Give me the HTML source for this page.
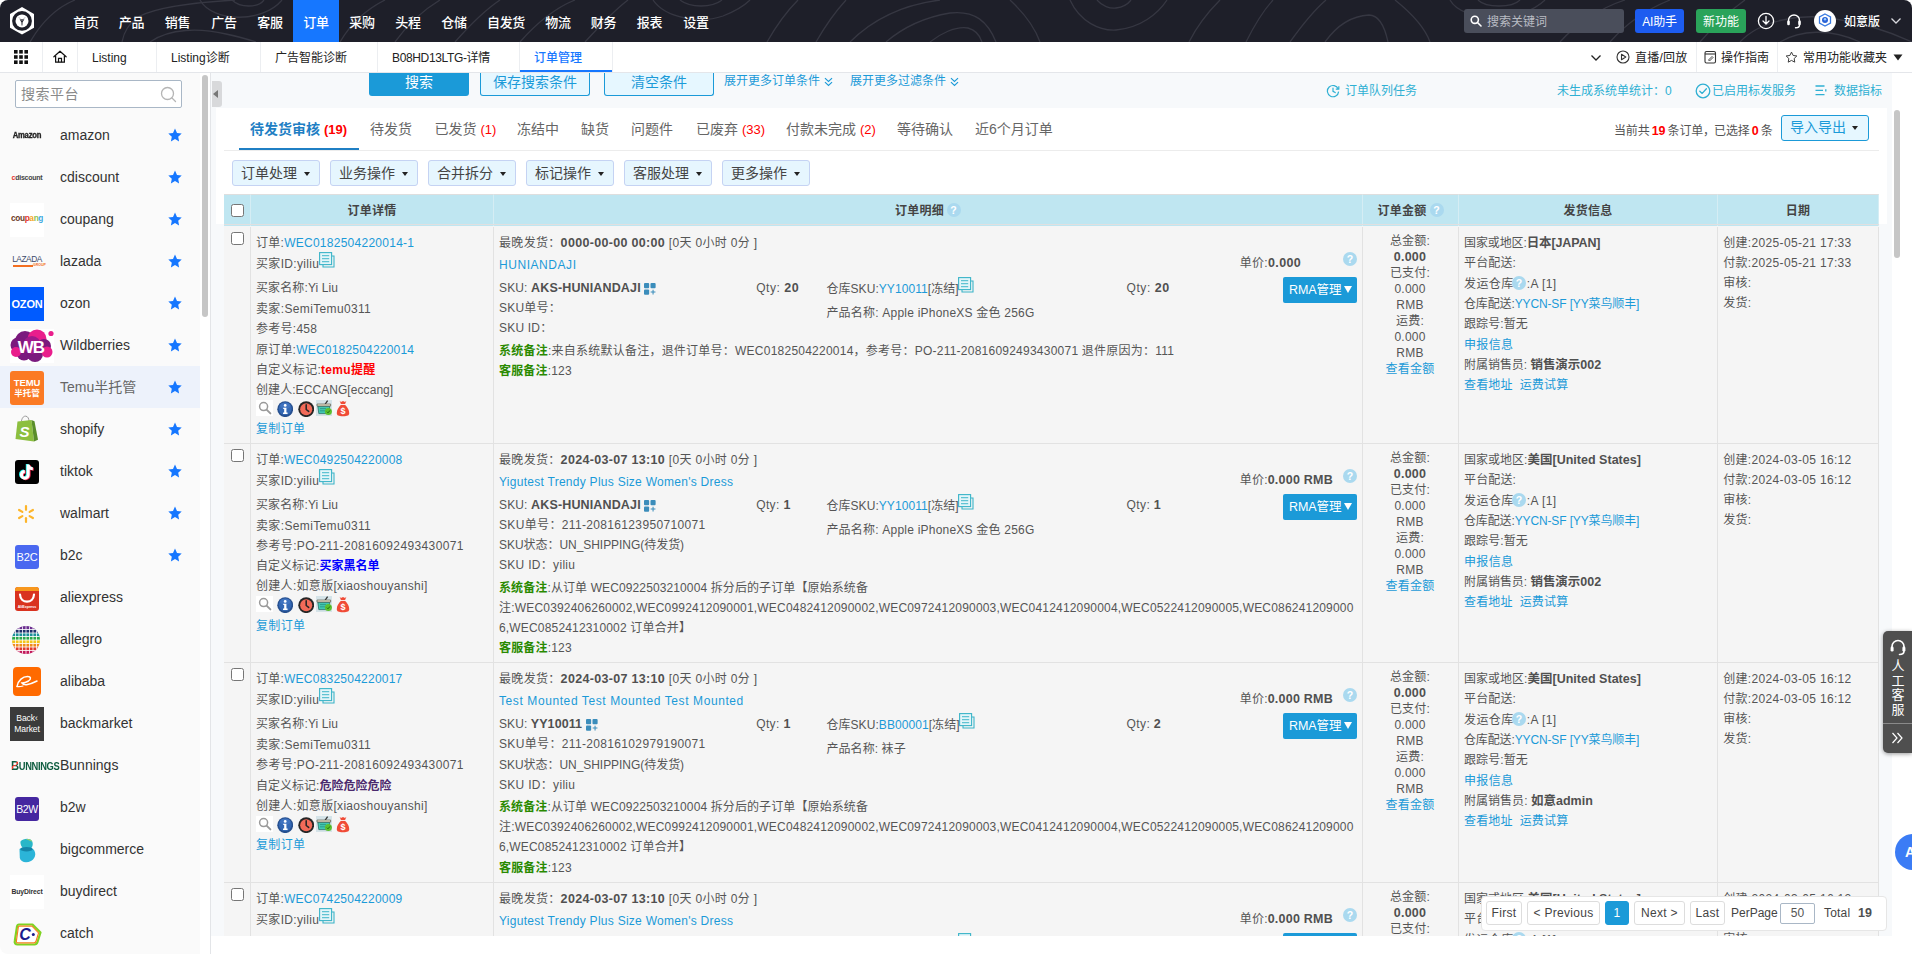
<!DOCTYPE html>
<html lang="zh-CN"><head><meta charset="utf-8"><title>订单管理</title>
<style>
*{box-sizing:border-box}
html,body{margin:0;padding:0}
body{width:1912px;height:954px;overflow:hidden;position:relative;background:#fff;
 font-family:"Liberation Sans","Noto Sans CJK SC",sans-serif;font-size:12px;color:#555}
a{text-decoration:none;color:#1b9ad8}
.abs{position:absolute}
/* ---------- top nav ---------- */
#nav{position:absolute;left:0;top:0;width:1912px;height:42px;background:#1e1f29;overflow:hidden;border-radius:8px 8px 0 0}
#nav .mi{position:absolute;top:0;height:42px;line-height:46px;color:#fff;font-size:13px;text-align:center;width:46px;letter-spacing:-.3px;font-weight:500}
#nav .mi.on{background:#1677ff}
/* ---------- tab bar ---------- */
#tabs{position:absolute;left:0;top:42px;width:1912px;height:31px;background:#fff;border-bottom:1px solid #e4e6ea}
#tabs .t{position:absolute;top:0;height:30px;line-height:33px;font-size:12px;color:#222;white-space:nowrap}
#tabs .sep{position:absolute;top:0;width:1px;height:30px;background:#eceef1}
/* ---------- sidebar ---------- */
#side{position:absolute;left:0;top:73px;width:200px;height:881px;background:#fafafa;overflow:hidden;border-radius:0 0 0 8px}
#side .it{position:absolute;left:0;width:200px;height:42px}
#side .it .lb{position:absolute;left:60px;top:0;line-height:42px;font-size:14px;color:#333;white-space:nowrap}
#side .it .ic{position:absolute;left:10px;top:5px;width:50px;height:34px}
#side .it svg.st{position:absolute;left:168px;top:14px}

#main{position:absolute;left:0;top:0;width:1892px;height:936px;overflow:hidden}
#main .bg{position:absolute;left:211px;top:73px;width:1681px;height:863px;background:#f7f9fb}
#main .wh{position:absolute;left:216px;top:108px;width:1671px;height:116px;background:#fff}
.ln{position:absolute;height:20px;line-height:20px;white-space:nowrap;font-size:12px;color:#555;letter-spacing:.2px}
.ln b{font-size:12.5px;color:#505050}
.lk{color:#1b9ad8}
.tl{color:#2fb0d3}
.btn1{position:absolute;top:73px;height:23px;border-radius:0 0 3px 3px;font-size:14px;line-height:19px;text-align:center}
.stab{position:absolute;top:119px;height:20px;line-height:20px;font-size:14px;color:#666;white-space:nowrap}
.stab i{font-style:normal;color:#f00;font-size:13px}
.op{position:absolute;top:160px;width:88px;height:26px;border:1px solid #c5d3f3;border-radius:3px;background:#e6f6fe;font-size:14px;line-height:24px;color:#444;padding-left:8px;white-space:nowrap}
.op:after{content:"";position:absolute;left:71px;top:11px;border:3.5px solid transparent;border-top:4px solid #222;border-bottom:0}
.th{position:absolute;top:194px;height:32px;background:#bfe6f1;border-right:1px solid #d5edf4;border-top:1px solid #dedede;line-height:32px;text-align:center;font-weight:bold;font-size:12px;color:#444;letter-spacing:.3px}
.row{position:absolute;left:224px;width:1655px;background:#f5f5f5;border-bottom:1px solid #e2e2e2;border-top:1px solid #e2e2e2}
.row .vb{position:absolute;top:0;bottom:0;width:1px;background:#e2e2e2}
.cb{position:absolute;width:13px;height:13px;border:1px solid #767676;border-radius:2.5px;background:#fff}
.q{position:absolute;width:14px;height:14px;border-radius:7px;background:#aad9ef;color:#fff;font-size:10.5px;line-height:14.5px;margin:-1px 0 0 -.5px;text-align:center;font-weight:bold;letter-spacing:0}
.rma{position:absolute;left:1283px;width:74px;height:26px;border-radius:2px;background:#1b9ad8;color:#fff;font-size:12.5px;line-height:27px;padding-left:6px;white-space:nowrap;letter-spacing:-.1px}
.rma:after{content:"";position:absolute;left:61px;top:8.5px;border:4px solid transparent;border-top:7px solid #fff;border-bottom:0}
.am{position:absolute;left:1362px;width:96px;text-align:center;height:16px;line-height:16px;font-size:12px;color:#555;letter-spacing:.2px}
.am b{font-size:12.5px;color:#505050}
.pg{position:absolute;top:901px;height:24px;border:1px solid #ddd;border-radius:3px;background:#fff;font-size:12px;line-height:23px;text-align:center;color:#444;letter-spacing:.3px}
</style></head>
<body>
<div id="nav">
<svg class="abs" style="left:0;top:0" width="1912" height="42" viewBox="0 0 1912 42" fill="none" stroke="#363742" stroke-width="1.3">
<path d="M30 42 C40 25 55 8 75 0"/><path d="M122 42 C124 32 128 24 140 16 C160 6 200 2 235 0"/>
<path d="M200 0 C212 22 262 24 282 0"/><path d="M232 0 C240 8 258 8 264 0"/><path d="M150 42 C170 28 200 28 226 34 C240 37 250 40 256 42"/>
<path d="M340 42 C350 25 365 10 385 0"/><path d="M395 42 C405 28 420 12 440 0"/><path d="M455 42 C470 25 485 10 500 0"/>
<path d="M520 42 C535 25 555 8 575 0"/><path d="M585 42 C598 28 612 12 628 0"/>
<path d="M653 0 C665 18 700 24 723 16 C738 10 746 4 750 0"/><path d="M680 0 C690 8 712 8 722 0"/>
<path d="M767 42 C775 28 786 12 798 0"/><path d="M816 42 C824 28 835 12 846 0"/>
<path d="M886 42 C900 30 920 18 950 13 C975 10 988 22 996 42"/><path d="M930 42 C940 34 955 26 968 28 C976 30 980 36 982 42"/><path d="M850 42 C870 22 900 5 940 0"/><path d="M1010 0 C1025 14 1035 28 1040 42"/>
<path d="M1070 0 C1080 22 1100 31 1116 30 C1140 28 1158 14 1167 0"/><path d="M1097 0 C1102 6 1110 9 1116 8 C1123 7 1128 4 1131 0"/>
<path d="M1189 42 C1196 28 1208 12 1220 0"/><path d="M1246 42 C1253 28 1262 12 1273 0"/><path d="M1290 42 C1300 28 1312 12 1326 0"/>
<path d="M1325 42 C1335 28 1350 16 1369 15 C1380 15 1385 28 1388 42"/><path d="M1395 0 C1410 12 1425 28 1430 42"/>
<path d="M1450 0 C1462 22 1520 24 1545 0"/><path d="M1478 0 C1486 8 1512 8 1520 0"/><path d="M1560 42 C1575 25 1600 8 1625 0"/><path d="M1610 42 C1625 25 1645 10 1670 0"/>
<path d="M1700 42 C1712 28 1728 12 1745 0"/><path d="M1740 42 C1760 20 1800 14 1830 18 C1870 24 1895 34 1912 42"/><path d="M1780 42 C1800 30 1830 28 1860 42"/>
</svg>
<svg class="abs" style="left:9px;top:6px" width="26" height="30" viewBox="0 0 26 30"><path d="M13 1 L25 7.9 V21.7 L13 28.6 L1 21.7 V7.9 Z" fill="#fff"/><circle cx="13" cy="14.9" r="9.9" fill="#1e1f29"/><circle cx="13" cy="14.9" r="6.5" fill="#fff"/><path d="M10.6 13.2 H15.4 L13.6 16.2 L13.4 19.6 H12.6 L12.4 16.2Z" fill="#23242e"/><path d="M13 14.8 L9.8 11.2 M13 14.8 L16.2 11.2" stroke="#9a9aa2" stroke-width=".7"/></svg>
<div class="mi" style="left:63px;width:46px">首页</div>
<div class="mi" style="left:108.5px;width:46px">产品</div>
<div class="mi" style="left:154.5px;width:46px">销售</div>
<div class="mi" style="left:201px;width:46px">广告</div>
<div class="mi" style="left:247px;width:46px">客服</div>
<div class="mi on" style="left:293px;width:46px">订单</div>
<div class="mi" style="left:339px;width:46px">采购</div>
<div class="mi" style="left:385px;width:46px">头程</div>
<div class="mi" style="left:431px;width:46px">仓储</div>
<div class="mi" style="left:483px;width:46px">自发货</div>
<div class="mi" style="left:535px;width:46px">物流</div>
<div class="mi" style="left:580.5px;width:46px">财务</div>
<div class="mi" style="left:626.5px;width:46px">报表</div>
<div class="mi" style="left:673px;width:46px">设置</div>
<div class="abs" style="left:1464px;top:9px;width:160px;height:24px;background:#4a4e5b;border-radius:3px"></div>
<svg class="abs" style="left:1470px;top:15px" width="12" height="12" viewBox="0 0 12 12" fill="none" stroke="#fff" stroke-width="1.6"><circle cx="4.8" cy="4.8" r="3.6"/><path d="M7.5 7.5 L11 11" stroke-linecap="round"/></svg>
<div class="abs" style="left:1487px;top:9px;height:24px;line-height:27px;font-size:12px;color:#b9bcc4">搜索关键词</div>
<div class="abs" style="left:1635px;top:9px;width:49px;height:24px;line-height:26.5px;background:#1d5cf0;border-radius:3px;color:#fff;font-size:12px;text-align:center;letter-spacing:-.2px">AI助手</div>
<div class="abs" style="left:1696px;top:9px;width:50px;height:24px;line-height:26.5px;background:#2aa35a;border-radius:3px;color:#fff;font-size:12px;text-align:center">新功能</div>
<svg class="abs" style="left:1757px;top:12px" width="18" height="18" viewBox="0 0 18 18" fill="none" stroke="#fff" stroke-width="1.3"><circle cx="9" cy="9" r="7.6"/><path d="M9 4.5 V11.5 M6 9 L9 12 L12 9" stroke-linecap="round" stroke-linejoin="round"/></svg>
<svg class="abs" style="left:1785px;top:12px" width="18" height="18" viewBox="0 0 18 18" fill="none" stroke="#fff" stroke-width="1.4"><path d="M3.5 11 V8.5 A5.5 5.5 0 0 1 14.5 8.5 V11" /><rect x="2.2" y="8.6" width="2.6" height="4.6" rx="1.2" fill="#fff" stroke="none"/><rect x="13.2" y="8.6" width="2.6" height="4.6" rx="1.2" fill="#fff" stroke="none"/><path d="M14.5 13 C14.5 15 12.5 15.8 10.5 15.8" stroke-linecap="round"/></svg>
<div class="abs" style="left:1814px;top:10px;width:22px;height:22px;border-radius:11px;background:#fff"></div>
<svg class="abs" style="left:1818px;top:13px" width="14" height="16" viewBox="0 0 14 16"><path d="M7 1 L12.5 4 V10 L7 13 L1.5 10 V4Z" fill="none" stroke="#3a7be0" stroke-width="1.3"/><circle cx="7" cy="7" r="3" fill="#2a63d6"/><circle cx="7" cy="6.2" r="1.2" fill="#9ad0ff"/></svg>
<div class="abs" style="left:1844px;top:0;height:42px;line-height:45px;font-size:12px;color:#fff;font-weight:500">如意版</div>
<svg class="abs" style="left:1890px;top:17px" width="12" height="8" viewBox="0 0 12 8" fill="none" stroke="#d8d8de" stroke-width="1.3"><path d="M1.5 1.5 L6 6 L10.5 1.5"/></svg>
</div>
<div id="tabs">
<svg class="abs" style="left:14px;top:8px" width="14" height="14" viewBox="0 0 14 14" fill="#111"><rect x="0" y="0" width="3.6" height="3.6"/><rect x="5.2" y="0" width="3.6" height="3.6"/><rect x="10.4" y="0" width="3.6" height="3.6"/><rect x="0" y="5.2" width="3.6" height="3.6"/><rect x="5.2" y="5.2" width="3.6" height="3.6"/><rect x="10.4" y="5.2" width="3.6" height="3.6"/><rect x="0" y="10.4" width="3.6" height="3.6"/><rect x="5.2" y="10.4" width="3.6" height="3.6"/><rect x="10.4" y="10.4" width="3.6" height="3.6"/></svg>
<div class="sep" style="left:42px"></div><svg class="abs" style="left:53px;top:8px" width="14" height="13.5" viewBox="0 0 16 15" fill="none" stroke="#111" stroke-width="1.4"><path d="M1 7.5 L8 1.2 L15 7.5" stroke-linejoin="round" stroke-linecap="round"/><path d="M3 6.5 V13.7 H13 V6.5"/><path d="M6.3 13.7 V9.3 H9.7 V13.7"/></svg>
<div class="sep" style="left:77px"></div><div class="t" style="left:92px">Listing</div><div class="sep" style="left:156px"></div><div class="t" style="left:171px">Listing诊断</div><div class="sep" style="left:260px"></div><div class="t" style="left:275px">广告智能诊断</div><div class="sep" style="left:377px"></div><div class="t" style="left:392px;letter-spacing:-.35px">B08HD13LTG-详情</div><div class="sep" style="left:519px"></div><div class="t" style="left:534px;color:#1677ff;font-weight:500">订单管理</div><div class="abs" style="left:520px;top:28px;width:92px;height:2px;background:#1677ff"></div><div class="sep" style="left:612px"></div>
<svg class="abs" style="left:1590px;top:12px" width="12" height="8" viewBox="0 0 12 8" fill="none" stroke="#222" stroke-width="1.3"><path d="M1.5 1.5 L6 6 L10.5 1.5"/></svg><svg class="abs" style="left:1616px;top:8px" width="14" height="14" viewBox="0 0 14 14" fill="none" stroke="#333" stroke-width="1.1"><circle cx="7" cy="7" r="6"/><path d="M5.5 4.3 L9.8 7 L5.5 9.7Z" stroke-linejoin="round"/></svg><div class="t" style="left:1635px;font-size:12px;letter-spacing:.2px">直播/回放</div><div class="sep" style="left:1696px"></div><svg class="abs" style="left:1704px;top:8px" width="13" height="14" viewBox="0 0 13 14" fill="none" stroke="#333" stroke-width="1.1"><rect x="1" y="1.5" width="10.5" height="11.5" rx="1.5"/><path d="M1 4 H11.5"/><path d="M4.5 10 L8 6.5 L9 7.5 L5.5 11Z" stroke-width=".9"/></svg><div class="t" style="left:1721px;font-size:12px">操作指南</div><div class="sep" style="left:1777px"></div><svg class="abs" style="left:1785px;top:9px" width="13" height="12" viewBox="0 0 15 14" fill="none" stroke="#333" stroke-width="1.1"><path d="M7.5 1.3 L9.4 5.2 L13.7 5.8 L10.6 8.8 L11.3 13 L7.5 11 L3.7 13 L4.4 8.8 L1.3 5.8 L5.6 5.2Z" stroke-linejoin="round"/></svg><div class="t" style="left:1803px;font-size:12px">常用功能收藏夹</div><svg class="abs" style="left:1893px;top:12px" width="10" height="7" viewBox="0 0 10 7"><path d="M0.5 0.5 H9.5 L5 6.5Z" fill="#222"/></svg></div>
<div id="side">
<div class="abs" style="left:15px;top:7px;width:167px;height:28px;border:1px solid #a9b7c6;border-radius:2px;background:#fff"></div><div class="abs" style="left:21px;top:7px;height:28px;line-height:28px;font-size:14px;color:#8a8a8a;letter-spacing:.5px">搜索平台</div><svg class="abs" style="left:160px;top:13px" width="17" height="17" viewBox="0 0 17 17" fill="none" stroke="#b5b5b5" stroke-width="1.3"><circle cx="7.5" cy="7.5" r="6"/><path d="M12 12 L15.5 15.5" stroke-linecap="round"/></svg>
<div class="it" style="top:41px"><div class="ic"><div style="position:absolute;left:1px;top:11px;width:32px;text-align:center;font-size:8.5px;line-height:11px;font-weight:bold;color:#222;letter-spacing:-.2px;-webkit-text-stroke:.35px #222;transform:scaleX(.9);transform-origin:50% 50%">Amazon</div></div><div class="lb">amazon</div><svg class="st" width="14" height="14" viewBox="0 0 14 14"><path d="M7 .6 L9 4.9 L13.7 5.5 L10.2 8.7 L11.1 13.4 L7 11.1 L2.9 13.4 L3.8 8.7 L.3 5.5 L5 4.9Z" fill="#1677ff"/></svg></div>
<div class="it" style="top:83px"><div class="ic"><div style="position:absolute;left:0;top:12px;width:34px;text-align:center;font-size:7px;line-height:10px;font-weight:bold;color:#444;letter-spacing:-.25px"><span style="color:#e5322d">c</span>discount</div></div><div class="lb">cdiscount</div><svg class="st" width="14" height="14" viewBox="0 0 14 14"><path d="M7 .6 L9 4.9 L13.7 5.5 L10.2 8.7 L11.1 13.4 L7 11.1 L2.9 13.4 L3.8 8.7 L.3 5.5 L5 4.9Z" fill="#1677ff"/></svg></div>
<div class="it" style="top:125px"><div class="ic"><div style="position:absolute;left:0;top:0;width:34px;height:34px;background:#fff"></div><div style="position:absolute;left:0;top:10px;width:34px;text-align:center;font-size:8.3px;line-height:11px;font-weight:bold;letter-spacing:-.35px;color:#6b3a1f">cou<span style="color:#e3342f">p</span><span style="color:#f5a623">a</span><span style="color:#8bc34a">n</span><span style="color:#3fa9e0">g</span></div></div><div class="lb">coupang</div><svg class="st" width="14" height="14" viewBox="0 0 14 14"><path d="M7 .6 L9 4.9 L13.7 5.5 L10.2 8.7 L11.1 13.4 L7 11.1 L2.9 13.4 L3.8 8.7 L.3 5.5 L5 4.9Z" fill="#1677ff"/></svg></div>
<div class="it" style="top:167px"><div class="ic"><div style="position:absolute;left:2px;top:9px;width:30px;text-align:center;font-size:8.4px;line-height:10px;color:#3a4a6a;letter-spacing:-.5px">LAZADA</div><div style="position:absolute;left:3px;top:19.5px;width:20px;height:2px;background:#f36f21"></div><div style="position:absolute;left:23px;top:18px;font-size:3.5px;line-height:4px;color:#f36f21;font-weight:bold">GROUP</div></div><div class="lb">lazada</div><svg class="st" width="14" height="14" viewBox="0 0 14 14"><path d="M7 .6 L9 4.9 L13.7 5.5 L10.2 8.7 L11.1 13.4 L7 11.1 L2.9 13.4 L3.8 8.7 L.3 5.5 L5 4.9Z" fill="#1677ff"/></svg></div>
<div class="it" style="top:209px"><div class="ic"><div style="position:absolute;left:0;top:0;width:34px;height:34px;background:#005bff"></div><div style="position:absolute;left:0;top:11px;width:34px;text-align:center;font-size:11px;line-height:12px;font-weight:bold;color:#fff;letter-spacing:-.2px">OZON</div></div><div class="lb">ozon</div><svg class="st" width="14" height="14" viewBox="0 0 14 14"><path d="M7 .6 L9 4.9 L13.7 5.5 L10.2 8.7 L11.1 13.4 L7 11.1 L2.9 13.4 L3.8 8.7 L.3 5.5 L5 4.9Z" fill="#1677ff"/></svg></div>
<div class="it" style="top:251px"><div class="ic"><svg style="position:absolute;left:0;top:0" width="44" height="34" viewBox="0 0 44 34"><rect width="44" height="34" fill="#fff"/><circle cx="15" cy="12" r="10" fill="#7b1a7e"/><circle cx="8" cy="16" r="7.5" fill="#7b1a7e"/><circle cx="27" cy="10" r="9.5" fill="#e91e8c"/><circle cx="34" cy="17" r="7" fill="#7b1a7e"/><circle cx="14" cy="24" r="7.5" fill="#7b1a7e"/><circle cx="25" cy="25" r="8" fill="#7b1a7e"/><circle cx="6" cy="23" r="5" fill="#e91e8c"/><circle cx="37" cy="23" r="5.5" fill="#e91e8c"/><circle cx="22" cy="16" r="9" fill="#a0198c"/><circle cx="41" cy="4.5" r="2.6" fill="#e91e8c"/><text x="21" y="24" font-size="17" font-weight="bold" fill="#fff" text-anchor="middle" letter-spacing="-1" font-family="Liberation Sans,sans-serif">WB</text></svg></div><div class="lb">Wildberries</div><svg class="st" width="14" height="14" viewBox="0 0 14 14"><path d="M7 .6 L9 4.9 L13.7 5.5 L10.2 8.7 L11.1 13.4 L7 11.1 L2.9 13.4 L3.8 8.7 L.3 5.5 L5 4.9Z" fill="#1677ff"/></svg></div>
<div class="it" style="top:293px;background:#edf2fb"><div class="ic"><div style="position:absolute;left:0;top:0;width:34px;height:34px;border-radius:3px;background:#fb7a24"></div><div style="position:absolute;left:0;top:7px;width:34px;text-align:center;font-size:9.5px;line-height:10px;font-weight:bold;color:#fff;letter-spacing:-.1px">TEMU</div><div style="position:absolute;left:0;top:17px;width:34px;text-align:center;font-size:8.5px;line-height:11px;font-weight:bold;color:#fff;font-family:Liberation Sans,Noto Sans CJK SC,sans-serif">半托管</div></div><div class="lb" style="color:#666">Temu半托管</div><svg class="st" width="14" height="14" viewBox="0 0 14 14"><path d="M7 .6 L9 4.9 L13.7 5.5 L10.2 8.7 L11.1 13.4 L7 11.1 L2.9 13.4 L3.8 8.7 L.3 5.5 L5 4.9Z" fill="#1677ff"/></svg></div>
<div class="it" style="top:335px"><div class="ic"><svg style="position:absolute;left:4px;top:2px" width="26" height="30" viewBox="0 0 26 30"><path d="M7.5 6 C8 2.5 10 .8 12 1.2 C14 1.6 14.8 3.6 15 6" fill="none" stroke="#9a9a9a" stroke-width="1"/><path d="M3.5 6.5 L17.5 5 L20 26.5 L1.5 24 Z" fill="#8cbf3f"/><path d="M17.5 5 L20.5 6.3 L24 24.8 L20 26.5Z" fill="#5a8e2a"/><text x="10.6" y="21.5" font-size="15" font-weight="bold" font-style="italic" fill="#fff" text-anchor="middle" font-family="Liberation Sans,sans-serif">S</text></svg></div><div class="lb">shopify</div><svg class="st" width="14" height="14" viewBox="0 0 14 14"><path d="M7 .6 L9 4.9 L13.7 5.5 L10.2 8.7 L11.1 13.4 L7 11.1 L2.9 13.4 L3.8 8.7 L.3 5.5 L5 4.9Z" fill="#1677ff"/></svg></div>
<div class="it" style="top:377px"><div class="ic"><svg style="position:absolute;left:5px;top:5px" width="24" height="24" viewBox="0 0 24 24"><rect width="24" height="24" rx="3" fill="#000"/><g fill="none" stroke-width="3" stroke-linecap="butt"><path d="M13.2 4.5 V14.8 A3.4 3.4 0 1 1 9.8 11.4 M13.2 4.5 C13.4 7 15.4 8.6 17.8 8.7" stroke="#25f4ee" transform="translate(-.9 -.5)"/><path d="M13.2 4.5 V14.8 A3.4 3.4 0 1 1 9.8 11.4 M13.2 4.5 C13.4 7 15.4 8.6 17.8 8.7" stroke="#fe2c55" transform="translate(.9 .5)"/><path d="M13.2 4.5 V14.8 A3.4 3.4 0 1 1 9.8 11.4 M13.2 4.5 C13.4 7 15.4 8.6 17.8 8.7" stroke="#fff"/></g></svg></div><div class="lb">tiktok</div><svg class="st" width="14" height="14" viewBox="0 0 14 14"><path d="M7 .6 L9 4.9 L13.7 5.5 L10.2 8.7 L11.1 13.4 L7 11.1 L2.9 13.4 L3.8 8.7 L.3 5.5 L5 4.9Z" fill="#1677ff"/></svg></div>
<div class="it" style="top:419px"><div class="ic"><svg style="position:absolute;left:6px;top:7px" width="20" height="20" viewBox="-10 -10 20 20"><g stroke="#fdb52a" stroke-width="2.2" stroke-linecap="round"><path d="M0 -4.2 V-8" transform="rotate(0)"/><path d="M0 -4.2 V-8" transform="rotate(60)"/><path d="M0 -4.2 V-8" transform="rotate(120)"/><path d="M0 -4.2 V-8" transform="rotate(180)"/><path d="M0 -4.2 V-8" transform="rotate(240)"/><path d="M0 -4.2 V-8" transform="rotate(300)"/></g></svg></div><div class="lb">walmart</div><svg class="st" width="14" height="14" viewBox="0 0 14 14"><path d="M7 .6 L9 4.9 L13.7 5.5 L10.2 8.7 L11.1 13.4 L7 11.1 L2.9 13.4 L3.8 8.7 L.3 5.5 L5 4.9Z" fill="#1677ff"/></svg></div>
<div class="it" style="top:461px"><div class="ic"><div style="position:absolute;left:5px;top:6px;width:24px;height:24px;border-radius:3px;background:#4a68f0"></div><div style="position:absolute;left:5px;top:12px;width:24px;text-align:center;font-size:11px;line-height:12px;color:#fff;letter-spacing:-.2px">B2C</div></div><div class="lb">b2c</div><svg class="st" width="14" height="14" viewBox="0 0 14 14"><path d="M7 .6 L9 4.9 L13.7 5.5 L10.2 8.7 L11.1 13.4 L7 11.1 L2.9 13.4 L3.8 8.7 L.3 5.5 L5 4.9Z" fill="#1677ff"/></svg></div>
<div class="it" style="top:503px"><div class="ic"><div style="position:absolute;left:5px;top:6px;width:24px;height:24px;border-radius:3px;background:#d9321f;overflow:hidden"><div style="height:4px;background:#f7971d"></div></div><svg style="position:absolute;left:5px;top:6px" width="24" height="24" viewBox="0 0 24 24"><path d="M5 7.5 C5.5 17 18.5 17 19 7.5" fill="none" stroke="#fff" stroke-width="2.2" stroke-linecap="round"/></svg><div style="position:absolute;left:5px;top:24px;width:24px;text-align:center;font-size:3.6px;line-height:4px;color:#fff;font-weight:bold">AliExpress</div></div><div class="lb">aliexpress</div></div>
<div class="it" style="top:545px"><div class="ic"><svg style="position:absolute;left:2px;top:3px" width="28" height="28" viewBox="0 0 28 28"><defs><clipPath id="alc"><circle cx="14" cy="14" r="14"/></clipPath></defs><g clip-path="url(#alc)"><rect x="0" y="0" width="28" height="3.5" fill="#6a2c8e"/><rect x="0" y="3.5" width="28" height="3.5" fill="#1f2f6b"/><rect x="0" y="7" width="28" height="3.5" fill="#1b8f9a"/><rect x="0" y="10.5" width="28" height="3.5" fill="#2aa84a"/><rect x="0" y="14" width="28" height="3.5" fill="#f3c61a"/><rect x="0" y="17.5" width="28" height="3.5" fill="#f08a1c"/><rect x="0" y="21" width="28" height="3.5" fill="#e0392b"/><rect x="0" y="24.5" width="28" height="3.5" fill="#c2185b"/><rect x="3.1" y="0" width=".8" height="28" fill="#fff"/><rect x="0" y="3.1" width="28" height=".8" fill="#fff"/><rect x="6.6" y="0" width=".8" height="28" fill="#fff"/><rect x="0" y="6.6" width="28" height=".8" fill="#fff"/><rect x="10.1" y="0" width=".8" height="28" fill="#fff"/><rect x="0" y="10.1" width="28" height=".8" fill="#fff"/><rect x="13.6" y="0" width=".8" height="28" fill="#fff"/><rect x="0" y="13.6" width="28" height=".8" fill="#fff"/><rect x="17.1" y="0" width=".8" height="28" fill="#fff"/><rect x="0" y="17.1" width="28" height=".8" fill="#fff"/><rect x="20.6" y="0" width=".8" height="28" fill="#fff"/><rect x="0" y="20.6" width="28" height=".8" fill="#fff"/><rect x="24.1" y="0" width=".8" height="28" fill="#fff"/><rect x="0" y="24.1" width="28" height=".8" fill="#fff"/></g></svg></div><div class="lb">allegro</div></div>
<div class="it" style="top:587px"><div class="ic"><svg style="position:absolute;left:3px;top:2px" width="28" height="29" viewBox="0 0 28 29"><rect width="28" height="29" rx="4" fill="#ff6a00"/><path d="M4 19.5 C5 13 10 9.5 14.5 9.5 C18 9.5 18.5 12 15.5 14 C13 15.5 10.5 16 9 16 C10 17.5 12 18 14.5 17.5 C17.5 17 21 15.5 24 14" fill="none" stroke="#fff" stroke-width="1.5" stroke-linecap="round"/><path d="M4 19.5 C6 20 8 19.6 10 19" fill="none" stroke="#fff" stroke-width="1.2" stroke-linecap="round"/></svg></div><div class="lb">alibaba</div></div>
<div class="it" style="top:629px"><div class="ic"><div style="position:absolute;left:0;top:0;width:34px;height:34px;background:#3b3b3b"></div><div style="position:absolute;left:0;top:6px;width:34px;text-align:center;font-size:8.6px;line-height:11px;color:#fff;letter-spacing:-.1px">Back&#8249;<br>Market</div></div><div class="lb">backmarket</div></div>
<div class="it" style="top:671px"><div class="ic"><div style="position:absolute;left:1px;top:11px;width:50px;font-size:10.4px;line-height:12px;font-weight:bold;color:#0d5c3f;letter-spacing:-.4px;white-space:nowrap;transform:scaleX(.9);transform-origin:0 50%"><span style="font-size:12.5px;background:linear-gradient(135deg,#0d5c3f 38%,#e0392b 38%,#e0392b 52%,#0d5c3f 52%);-webkit-background-clip:text;background-clip:text;color:transparent">B</span>UNNINGS</div></div><div class="lb">Bunnings</div></div>
<div class="it" style="top:713px"><div class="ic"><div style="position:absolute;left:5px;top:6px;width:24px;height:24px;border-radius:3px;background:#4527a0"></div><div style="position:absolute;left:5px;top:12px;width:24px;text-align:center;font-size:10.5px;line-height:12px;color:#fff;letter-spacing:-.5px">B2W</div></div><div class="lb">b2w</div></div>
<div class="it" style="top:755px"><div class="ic"><svg style="position:absolute;left:8px;top:5px" width="19" height="25" viewBox="0 0 19 25"><path d="M2.5 3.5 C5 .5 12 -.3 14 3 C15.6 6 14.5 9.5 12 11.2 C6 11.5 2 9 2.5 3.5Z" fill="#29b6c8"/><path d="M8 1.2 C11 .3 13.6 1.5 14.4 4 C12.5 2.5 10 2 8 1.2Z" fill="#9ed36a"/><path d="M1.5 11 C4 8.5 12 8 15.5 11.5 C18.5 15 17.5 20.5 13 23 C8 25.5 2.5 24 1.8 20Z" fill="#2bb4d8"/><ellipse cx="8.5" cy="11.2" rx="6" ry="2.3" fill="#1585a8"/></svg></div><div class="lb">bigcommerce</div></div>
<div class="it" style="top:797px"><div class="ic"><div style="position:absolute;left:0;top:0;width:34px;height:34px;background:#fff"></div><div style="position:absolute;left:0;top:12px;width:34px;text-align:center;font-size:6.8px;line-height:10px;font-weight:bold;color:#333;letter-spacing:-.1px">BuyDirect</div></div><div class="lb">buydirect</div></div>
<div class="it" style="top:839px"><div class="ic"><svg style="position:absolute;left:3px;top:6px" width="29" height="23" viewBox="0 0 29 23"><path d="M6 1.5 H19.5 L27.5 9.5 L24.5 19 C24 20.5 23 21.5 21.5 21.5 H4.5 C2.5 21.5 1.3 20 1.8 18 L4 3.5 C4.2 2.3 5 1.5 6 1.5Z" fill="#fff" stroke="#7ed321" stroke-width="2.2" stroke-linejoin="round"/><path d="M6.3 3.2 H19 L25.6 9.9 L23 18.3 C22.7 19.3 22 19.8 21 19.8 H5 C3.8 19.8 3.2 19 3.4 18 L5.3 4.2 C5.4 3.6 5.8 3.2 6.3 3.2Z" fill="#fff" stroke="#f5821f" stroke-width="1.2" stroke-linejoin="round"/><text x="12" y="17.2" font-size="16" font-weight="bold" font-style="italic" fill="#1a1a8c" text-anchor="middle" font-family="Liberation Sans,sans-serif">C</text><circle cx="20.3" cy="11.4" r="1.5" fill="#1a1a8c"/></svg></div><div class="lb">catch</div></div>
</div>
<div class="abs" style="left:202px;top:75px;width:6px;height:242px;background:#c6c6c6;border-radius:3px"></div>
<div class="abs" style="left:210px;top:73px;width:1px;height:881px;background:#e3e5e8"></div>
<div class="abs" style="z-index:3;left:212px;top:81px;width:10px;height:26px;background:#d8d9db;border-radius:0 3px 3px 0"></div><div class="abs" style="z-index:3;left:213px;top:89.5px;border:4.6px solid transparent;border-right:5.5px solid #777;border-left:0"></div>
<div id="main">
<div class="bg"></div><div class="wh"></div>
<div class="btn1" style="left:369px;width:100px;background:#1b9ad8;color:#fff">搜索</div><div class="btn1" style="left:480px;width:110px;background:#e6f7ff;border:1px solid #1b9ad8;border-top:0;color:#1b9ad8">保存搜索条件</div><div class="btn1" style="left:604px;width:110px;background:#e6f7ff;border:1px solid #1b9ad8;border-top:0;color:#1b9ad8">清空条件</div>
<div class="ln lk" style="left:724px;top:71px;letter-spacing:0">展开更多订单条件</div><svg style="position:absolute;left:824px;top:76.5px" width="9" height="10" viewBox="0 0 8 9" fill="none" stroke="#1b9ad8" stroke-width="1"><path d="M.8 1 L4 4 L7.2 1 M.8 4.6 L4 7.6 L7.2 4.6"/></svg><div class="ln lk" style="left:850px;top:71px;letter-spacing:0">展开更多过滤条件</div><svg style="position:absolute;left:950px;top:76.5px" width="9" height="10" viewBox="0 0 8 9" fill="none" stroke="#1b9ad8" stroke-width="1"><path d="M.8 1 L4 4 L7.2 1 M.8 4.6 L4 7.6 L7.2 4.6"/></svg>
<svg class="abs" style="left:1326px;top:83.5px" width="14" height="14" viewBox="0 0 14 14" fill="none" stroke="#2fb0d3" stroke-width="1.2"><path d="M12.2 5 A5.6 5.6 0 1 0 12.6 7.6"/><path d="M12.8 2.2 V5.2 H9.8" stroke-linejoin="round"/><path d="M7 4 V7.3 L9.2 8.6" stroke-linecap="round"/></svg><div class="ln tl" style="left:1345px;top:81px;letter-spacing:0">订单队列任务</div><div class="ln tl" style="left:1557px;top:81px;letter-spacing:0">未生成系统单统计：0</div><svg class="abs" style="left:1695px;top:83px" width="16" height="16" viewBox="0 0 16 16" fill="none" stroke="#2fb0d3" stroke-width="1.3"><circle cx="8" cy="8" r="6.8"/><path d="M4.8 8.2 L7.2 10.4 L11.4 5.8" stroke-linecap="round" stroke-linejoin="round"/></svg><div class="ln tl" style="left:1712px;top:81px;letter-spacing:0">已启用标发服务</div><svg class="abs" style="left:1815px;top:85px" width="13" height="11" viewBox="0 0 13 11" fill="none" stroke="#2fb0d3" stroke-width="1.3"><path d="M.5 1 H9.5 M.5 5.3 H8 M.5 9.6 H9.5 M10.8 4.2 V6.4"/></svg><div class="ln tl" style="left:1834px;top:81px;letter-spacing:0">数据指标</div>
<div class="stab" style="left:250px"><b style="color:#1f7fc4">待发货审核 </b><i style="font-weight:bold">(19)</i></div><div class="stab" style="left:370px">待发货</div><div class="stab" style="left:434.5px">已发货 <i>(1)</i></div><div class="stab" style="left:517px">冻结中</div><div class="stab" style="left:581px">缺货</div><div class="stab" style="left:631px">问题件</div><div class="stab" style="left:696px">已废弃 <i>(33)</i></div><div class="stab" style="left:786px">付款未完成 <i>(2)</i></div><div class="stab" style="left:897px">等待确认</div><div class="stab" style="left:975px">近6个月订单</div>
<div class="abs" style="left:224px;top:150px;width:1655px;height:1px;background:#ececec"></div><div class="abs" style="left:239px;top:148px;width:120px;height:2px;background:#1f7fc4"></div>
<div class="ln" style="left:1614px;top:121px;color:#555;letter-spacing:-.15px;word-spacing:-1px">当前共 <b style="color:#f00">19</b> 条订单<span style="display:inline-block;width:11px;overflow:hidden;vertical-align:top">，</span>已选择 <b style="color:#f00">0</b> 条</div><div class="abs" style="left:1781px;top:115px;width:88px;height:26px;border:1px solid #1b9ad8;border-radius:3px;background:#e6f7ff;color:#1b9ad8;font-size:14px;line-height:23px;padding-left:8px">导入导出</div><div class="abs" style="left:1852px;top:126px;border:3.5px solid transparent;border-top:4px solid #222;border-bottom:0"></div>
<div class="op" style="left:232px">订单处理</div><div class="op" style="left:330px">业务操作</div><div class="op" style="left:428px">合并拆分</div><div class="op" style="left:526px">标记操作</div><div class="op" style="left:624px">客服处理</div><div class="op" style="left:722px">更多操作</div>
<div class="th" style="left:224px;width:27px"></div><div class="th" style="left:251px;width:243px">订单详情</div><div class="th" style="left:494px;width:869px">订单明细<span style="display:inline-block;width:17px"></span></div><div class="th" style="left:1363px;width:96px">订单金额<span style="display:inline-block;width:17px"></span></div><div class="th" style="left:1459px;width:259px">发货信息</div><div class="th" style="left:1718px;width:161px">日期</div><div class="abs" style="left:224px;top:224px;width:1655px;height:1px;background:#e0e0e0"></div><div class="cb" style="left:231px;top:204px"></div><div class="q" style="left:947px;top:204px">?</div><div class="q" style="left:1430px;top:204px">?</div>
<div class="row" style="top:226px;height:218px;border-top-color:#f5f5f5">
<div class="vb" style="left:26px"></div><div class="vb" style="left:269px"></div><div class="vb" style="left:1138px"></div><div class="vb" style="left:1234px"></div><div class="vb" style="left:1493px"></div><div class="vb" style="left:1654px"></div><div class="cb" style="left:7px;top:5px"></div>
<div id="f1" class="ln " style="left:32px;top:5.6px;letter-spacing:0.262px;">订单:<span class="lk">WEC0182504220014-1</span></div><div id="f2" class="ln " style="left:32px;top:26.6px;letter-spacing:0.332px;">买家ID:yiliu</div><svg style="position:absolute;left:95px;top:25px" width="16" height="16" viewBox="0 0 16 16" fill="none" stroke="#3bb4c8" stroke-width="1.1"><path d="M12.6 4 H15 V15 H4 V12.6"/><rect x=".6" y=".6" width="12" height="12" fill="#e3f5f9"/><path d="M3 3.6 H10.2 M3 6.6 H10.2 M3 9.6 H10.2" stroke-width="1.3" stroke="#5fc3d3"/></svg><div id="f3" class="ln " style="left:32px;top:50.5px;letter-spacing:0.109px;">买家名称:Yi Liu</div><div id="f4" class="ln " style="left:32px;top:71.7px;letter-spacing:0.355px;">卖家:SemiTemu0311</div><div id="f5" class="ln " style="left:32px;top:91.8px;letter-spacing:0.272px;">参考号:458</div><div id="f6" class="ln " style="left:32px;top:112.5px;letter-spacing:0.205px;">原订单:<span class="lk">WEC0182504220014</span></div><div id="f7" class="ln " style="left:32px;top:132.7px;letter-spacing:0.289px;">自定义标记:<b style="color:#f00;font-size:12px">temu提醒</b></div><div id="f8" class="ln " style="left:32px;top:152.9px;letter-spacing:0.068px;">创建人:ECCANG[eccang]</div><div style="position:absolute;left:32px;top:172.6px;width:100px;height:18px"><div style="position:absolute;left:0;top:0;width:17px;height:16px;background:#fff"></div><svg style="position:absolute;left:2px;top:1.5px" width="14" height="14" viewBox="0 0 14 14" fill="none" stroke="#9a9a9a" stroke-width="1.5"><circle cx="5.6" cy="5.6" r="4"/><path d="M8.8 8.8 L12.4 12.4" stroke-linecap="round" stroke-width="1.9"/></svg><svg style="position:absolute;left:21px;top:1px" width="16.4" height="16.4" viewBox="0 0 16 16"><circle cx="8" cy="8" r="7.7" fill="#27508f"/><circle cx="8" cy="7.4" r="6.3" fill="#3468b4"/><ellipse cx="8" cy="4.6" rx="5" ry="3" fill="#4a7cc6" opacity=".6"/><circle cx="8" cy="4.3" r="1.35" fill="#fff"/><path d="M6.1 6.6 H9.2 V11.3 H10.3 V12.6 H5.9 V11.3 H7 V7.9 H6.1Z" fill="#fff"/></svg><svg style="position:absolute;left:42px;top:1px" width="16.4" height="16.4" viewBox="0 0 16 16"><circle cx="8" cy="8" r="7.7" fill="#262626"/><circle cx="8" cy="8" r="5.9" fill="#f26a58"/><path d="M8 3.8 V8.3 L10.4 10.2" stroke="#262626" stroke-width="1.5" fill="none" stroke-linecap="round"/></svg><div style="position:absolute;left:60px;top:0;width:16px;height:16px;background:#d5e3e8"></div><svg style="position:absolute;left:60px;top:0" width="17" height="17" viewBox="0 0 17 17"><path d="M8.6 5 L11.6 .6" stroke="#333" stroke-width="1.3"/><path d="M1.8 6.2 H13.8 L12.8 13.6 H2.8Z" fill="#42c8b2" stroke="#2a6f68" stroke-width=".8"/><path d="M1 4 H14.6 V6 H1Z" fill="#ebe4cf" stroke="#4a4a3a" stroke-width=".6"/><path d="M4 8.6 H10 M4 10.8 H9" stroke="#2a8f80" stroke-width=".8"/><circle cx="12.4" cy="11.6" r="3.5" fill="#5cc12f"/><path d="M10.9 11.7 L12 12.8 L14 10.4" stroke="#1e6b10" stroke-width="1" fill="none"/></svg><svg style="position:absolute;left:80px;top:0" width="14" height="17" viewBox="0 0 14 17"><path d="M3.6 .8 L5 2 L7 .9 L9 2 L10.4 .8 L9 4.2 H5Z" fill="#f04b36"/><path d="M5 4.8 H9 C11.6 7.2 13.2 10.2 13.2 13 C13.2 15.6 11.6 16.2 7 16.2 C2.4 16.2 .8 15.6 .8 13 C.8 10.2 2.4 7.2 5 4.8Z" fill="#f04b36"/><path d="M4.6 4.5 H9.4" stroke="#fff" stroke-width=".7"/><text x="7" y="14.4" font-size="9" font-weight="bold" fill="#fff" text-anchor="middle" font-family="Liberation Sans,sans-serif">$</text></svg></div>
<div id="f9" class="ln lk" style="left:32px;top:192.3px;letter-spacing:0.329px;">复制订单</div>
<div id="f10" class="ln " style="left:275px;top:5.6px;letter-spacing:0.320px;">最晚发货：<b>0000-00-00 00:00</b> [0天 0小时 0分 ]</div><div id="f11" class="ln lk" style="left:275px;top:27.5px;letter-spacing:0.554px;">HUNIANDAJI</div><div id="f12" class="ln " style="left:275px;top:50.5px;letter-spacing:0.145px;">SKU: <b>AKS-HUNIANDAJI</b></div><svg style="position:absolute;left:420px;top:56px" width="12.4" height="12.4" viewBox="0 0 13 13" fill="#3b8dbb"><rect x="0" y="0" width="5.4" height="5.4" rx="1"/><rect x="6.8" y="0" width="5.4" height="5.4" rx="1"/><rect x="0" y="6.8" width="5.4" height="5.4" rx="1"/><path d="M9.5 7 V12 M7 9.5 H12" stroke="#3b8dbb" stroke-width="1.1"/></svg><div class="ln " style="left:275px;top:70.6px;">SKU单号：</div><div class="ln " style="left:275px;top:90.7px;">SKU ID：</div><div id="f13" class="ln " style="left:275px;top:114.1px;letter-spacing:0.235px;"><b style="color:#2a8a00;font-size:12px">系统备注</b>:来自系统默认备注，退件订单号：WEC0182504220014，参考号：PO-211-20816092493430071 退件原因为：111</div><div id="f14" class="ln " style="left:275px;top:133.5px;letter-spacing:0.176px;"><b style="color:#2a8a00;font-size:12px">客服备注</b>:123</div>
<div id="f15" class="ln " style="left:532.2px;top:50.5px;letter-spacing:0.541px;">Qty: <b>20</b></div><div id="f16" class="ln " style="left:602.4px;top:51.6px;letter-spacing:0.064px;">仓库SKU:<span class="lk">YY10011</span>[冻结]</div><svg style="position:absolute;left:734px;top:50px" width="16" height="16" viewBox="0 0 16 16" fill="none" stroke="#3bb4c8" stroke-width="1.1"><path d="M12.6 4 H15 V15 H4 V12.6"/><rect x=".6" y=".6" width="12" height="12" fill="#e3f5f9"/><path d="M3 3.6 H10.2 M3 6.6 H10.2 M3 9.6 H10.2" stroke-width="1.3" stroke="#5fc3d3"/></svg><div id="f17" class="ln " style="left:602.4px;top:75.5px;letter-spacing:0.215px;">产品名称: Apple iPhoneXS 金色 256G</div><div id="f18" class="ln " style="left:902.6px;top:50.5px;letter-spacing:0.541px;">Qty: <b>20</b></div><div id="f19" class="ln " style="left:1015.7px;top:25.6px;letter-spacing:0.340px;">单价:<b>0.000</b></div><div class="q" style="left:1119.5px;top:26px">?</div><div class="rma" style="top:50px;left:1059px">RMA管理</div>
<div class="am" style="left:1138px;top:6px">总金额:</div><div class="am" style="left:1138px;top:22px"><b>0.000</b></div><div class="am" style="left:1138px;top:38px">已支付:</div><div class="am" style="left:1138px;top:54px">0.000</div><div class="am" style="left:1138px;top:70px">RMB</div><div class="am" style="left:1138px;top:86px">运费:</div><div class="am" style="left:1138px;top:102px">0.000</div><div class="am" style="left:1138px;top:118px">RMB</div><div class="am" style="left:1138px;top:134px"><span class="lk">查看金额</span></div>
<div id="f20" class="ln " style="left:1240px;top:5.6px;letter-spacing:-0.116px;">国家或地区:<b>日本[JAPAN]</b></div><div id="f21" class="ln " style="left:1240px;top:26px;letter-spacing:0.139px;">平台配送:</div><div id="f22" class="ln " style="left:1240px;top:46.6px;letter-spacing:0.425px;">发运仓库<span style="display:inline-block;width:13px"></span>:A [1]</div><div class="q" style="left:1288.5px;top:50px">?</div><div id="f23" class="ln " style="left:1240px;top:66.9px;letter-spacing:-0.132px;">仓库配送:<span class="lk">YYCN-SF [YY菜鸟顺丰]</span></div><div id="f24" class="ln " style="left:1240px;top:87.3px;letter-spacing:0.091px;">跟踪号:暂无</div><div id="f25" class="ln lk" style="left:1240px;top:107.6px;letter-spacing:0.329px;">申报信息</div><div id="f26" class="ln " style="left:1240px;top:127.6px;letter-spacing:-0.034px;">附属销售员: <b>销售演示002</b></div><div id="f27" class="ln lk" style="left:1240px;top:147.7px;letter-spacing:0.170px;">查看地址&nbsp; 运费试算</div>
<div id="f28" class="ln " style="left:1499.2px;top:5.6px;letter-spacing:0.334px;">创建:2025-05-21 17:33</div><div id="f29" class="ln " style="left:1499.2px;top:26px;letter-spacing:0.334px;">付款:2025-05-21 17:33</div><div id="f30" class="ln " style="left:1499.2px;top:46px;letter-spacing:0.331px;">审核:</div><div id="f31" class="ln " style="left:1499.2px;top:66px;letter-spacing:0.331px;">发货:</div></div>
<div class="row" style="top:443px;height:220px">
<div class="vb" style="left:26px"></div><div class="vb" style="left:269px"></div><div class="vb" style="left:1138px"></div><div class="vb" style="left:1234px"></div><div class="vb" style="left:1493px"></div><div class="vb" style="left:1654px"></div><div class="cb" style="left:7px;top:5px"></div>
<div id="f32" class="ln " style="left:32px;top:5.6px;letter-spacing:0.233px;">订单:<span class="lk">WEC0492504220008</span></div><div id="f33" class="ln " style="left:32px;top:26.6px;letter-spacing:0.332px;">买家ID:yiliu</div><svg style="position:absolute;left:95px;top:25px" width="16" height="16" viewBox="0 0 16 16" fill="none" stroke="#3bb4c8" stroke-width="1.1"><path d="M12.6 4 H15 V15 H4 V12.6"/><rect x=".6" y=".6" width="12" height="12" fill="#e3f5f9"/><path d="M3 3.6 H10.2 M3 6.6 H10.2 M3 9.6 H10.2" stroke-width="1.3" stroke="#5fc3d3"/></svg><div id="f34" class="ln " style="left:32px;top:50.5px;letter-spacing:0.109px;">买家名称:Yi Liu</div><div id="f35" class="ln " style="left:32px;top:71.7px;letter-spacing:0.355px;">卖家:SemiTemu0311</div><div id="f36" class="ln " style="left:32px;top:91.8px;letter-spacing:0.379px;">参考号:PO-211-20816092493430071</div><div id="f37" class="ln " style="left:32px;top:112px;letter-spacing:0.014px;">自定义标记:<b style="color:#00f;font-size:12px">买家黑名单</b></div><div id="f38" class="ln " style="left:32px;top:132.2px;letter-spacing:0.303px;">创建人:如意版[xiaoshouyanshi]</div><div style="position:absolute;left:32px;top:151.9px;width:100px;height:18px"><div style="position:absolute;left:0;top:0;width:17px;height:16px;background:#fff"></div><svg style="position:absolute;left:2px;top:1.5px" width="14" height="14" viewBox="0 0 14 14" fill="none" stroke="#9a9a9a" stroke-width="1.5"><circle cx="5.6" cy="5.6" r="4"/><path d="M8.8 8.8 L12.4 12.4" stroke-linecap="round" stroke-width="1.9"/></svg><svg style="position:absolute;left:21px;top:1px" width="16.4" height="16.4" viewBox="0 0 16 16"><circle cx="8" cy="8" r="7.7" fill="#27508f"/><circle cx="8" cy="7.4" r="6.3" fill="#3468b4"/><ellipse cx="8" cy="4.6" rx="5" ry="3" fill="#4a7cc6" opacity=".6"/><circle cx="8" cy="4.3" r="1.35" fill="#fff"/><path d="M6.1 6.6 H9.2 V11.3 H10.3 V12.6 H5.9 V11.3 H7 V7.9 H6.1Z" fill="#fff"/></svg><svg style="position:absolute;left:42px;top:1px" width="16.4" height="16.4" viewBox="0 0 16 16"><circle cx="8" cy="8" r="7.7" fill="#262626"/><circle cx="8" cy="8" r="5.9" fill="#f26a58"/><path d="M8 3.8 V8.3 L10.4 10.2" stroke="#262626" stroke-width="1.5" fill="none" stroke-linecap="round"/></svg><div style="position:absolute;left:60px;top:0;width:16px;height:16px;background:#d5e3e8"></div><svg style="position:absolute;left:60px;top:0" width="17" height="17" viewBox="0 0 17 17"><path d="M8.6 5 L11.6 .6" stroke="#333" stroke-width="1.3"/><path d="M1.8 6.2 H13.8 L12.8 13.6 H2.8Z" fill="#42c8b2" stroke="#2a6f68" stroke-width=".8"/><path d="M1 4 H14.6 V6 H1Z" fill="#ebe4cf" stroke="#4a4a3a" stroke-width=".6"/><path d="M4 8.6 H10 M4 10.8 H9" stroke="#2a8f80" stroke-width=".8"/><circle cx="12.4" cy="11.6" r="3.5" fill="#5cc12f"/><path d="M10.9 11.7 L12 12.8 L14 10.4" stroke="#1e6b10" stroke-width="1" fill="none"/></svg><svg style="position:absolute;left:80px;top:0" width="14" height="17" viewBox="0 0 14 17"><path d="M3.6 .8 L5 2 L7 .9 L9 2 L10.4 .8 L9 4.2 H5Z" fill="#f04b36"/><path d="M5 4.8 H9 C11.6 7.2 13.2 10.2 13.2 13 C13.2 15.6 11.6 16.2 7 16.2 C2.4 16.2 .8 15.6 .8 13 C.8 10.2 2.4 7.2 5 4.8Z" fill="#f04b36"/><path d="M4.6 4.5 H9.4" stroke="#fff" stroke-width=".7"/><text x="7" y="14.4" font-size="9" font-weight="bold" fill="#fff" text-anchor="middle" font-family="Liberation Sans,sans-serif">$</text></svg></div>
<div id="f39" class="ln lk" style="left:32px;top:171.6px;letter-spacing:0.329px;">复制订单</div>
<div id="f40" class="ln " style="left:275px;top:5.6px;letter-spacing:0.320px;">最晚发货：<b>2024-03-07 13:10</b> [0天 0小时 0分 ]</div><div id="f41" class="ln lk" style="left:275px;top:27.5px;letter-spacing:0.271px;">Yigutest Trendy Plus Size Women's Dress</div><div id="f42" class="ln " style="left:275px;top:50.5px;letter-spacing:0.145px;">SKU: <b>AKS-HUNIANDAJI</b></div><svg style="position:absolute;left:420px;top:56px" width="12.4" height="12.4" viewBox="0 0 13 13" fill="#3b8dbb"><rect x="0" y="0" width="5.4" height="5.4" rx="1"/><rect x="6.8" y="0" width="5.4" height="5.4" rx="1"/><rect x="0" y="6.8" width="5.4" height="5.4" rx="1"/><path d="M9.5 7 V12 M7 9.5 H12" stroke="#3b8dbb" stroke-width="1.1"/></svg><div id="f43" class="ln " style="left:275px;top:70.6px;letter-spacing:0.344px;">SKU单号：211-20816123950710071</div><div id="f44" class="ln " style="left:275px;top:90.7px;letter-spacing:-0.044px;">SKU状态：UN_SHIPPING(待发货)</div><div id="f45" class="ln " style="left:275px;top:110.8px;letter-spacing:0.301px;">SKU ID：yiliu</div><div id="f46" class="ln " style="left:275px;top:133.5px;letter-spacing:0.111px;"><b style="color:#2a8a00;font-size:12px">系统备注</b>:从订单 WEC0922503210004 拆分后的子订单【原始系统备</div><div id="f47" class="ln " style="left:275px;top:153.55px;letter-spacing:0.190px;">注:WEC0392406260002,WEC0992412090001,WEC0482412090002,WEC0972412090003,WEC0412412090004,WEC0522412090005,WEC086241209000</div><div id="f48" class="ln " style="left:275px;top:173.6px;letter-spacing:0.169px;">6,WEC0852412310002 订单合并】</div><div id="f49" class="ln " style="left:275px;top:193.7px;letter-spacing:0.176px;"><b style="color:#2a8a00;font-size:12px">客服备注</b>:123</div>
<div id="f50" class="ln " style="left:532.2px;top:50.5px;letter-spacing:0.380px;">Qty: <b>1</b></div><div id="f51" class="ln " style="left:602.4px;top:51.6px;letter-spacing:0.064px;">仓库SKU:<span class="lk">YY10011</span>[冻结]</div><svg style="position:absolute;left:734px;top:50px" width="16" height="16" viewBox="0 0 16 16" fill="none" stroke="#3bb4c8" stroke-width="1.1"><path d="M12.6 4 H15 V15 H4 V12.6"/><rect x=".6" y=".6" width="12" height="12" fill="#e3f5f9"/><path d="M3 3.6 H10.2 M3 6.6 H10.2 M3 9.6 H10.2" stroke-width="1.3" stroke="#5fc3d3"/></svg><div id="f52" class="ln " style="left:602.4px;top:75.5px;letter-spacing:0.215px;">产品名称: Apple iPhoneXS 金色 256G</div><div id="f53" class="ln " style="left:902.6px;top:50.5px;letter-spacing:0.380px;">Qty: <b>1</b></div><div id="f54" class="ln " style="left:1015.7px;top:25.6px;letter-spacing:0.221px;">单价:<b>0.000 RMB</b></div><div class="q" style="left:1119.5px;top:26px">?</div><div class="rma" style="top:50px;left:1059px">RMA管理</div>
<div class="am" style="left:1138px;top:6px">总金额:</div><div class="am" style="left:1138px;top:22px"><b>0.000</b></div><div class="am" style="left:1138px;top:38px">已支付:</div><div class="am" style="left:1138px;top:54px">0.000</div><div class="am" style="left:1138px;top:70px">RMB</div><div class="am" style="left:1138px;top:86px">运费:</div><div class="am" style="left:1138px;top:102px">0.000</div><div class="am" style="left:1138px;top:118px">RMB</div><div class="am" style="left:1138px;top:134px"><span class="lk">查看金额</span></div>
<div id="f55" class="ln " style="left:1240px;top:5.6px;letter-spacing:0.016px;">国家或地区:<b>美国[United States]</b></div><div id="f56" class="ln " style="left:1240px;top:26px;letter-spacing:0.139px;">平台配送:</div><div id="f57" class="ln " style="left:1240px;top:46.6px;letter-spacing:0.425px;">发运仓库<span style="display:inline-block;width:13px"></span>:A [1]</div><div class="q" style="left:1288.5px;top:50px">?</div><div id="f58" class="ln " style="left:1240px;top:66.9px;letter-spacing:-0.132px;">仓库配送:<span class="lk">YYCN-SF [YY菜鸟顺丰]</span></div><div id="f59" class="ln " style="left:1240px;top:87.3px;letter-spacing:0.091px;">跟踪号:暂无</div><div id="f60" class="ln lk" style="left:1240px;top:107.6px;letter-spacing:0.329px;">申报信息</div><div id="f61" class="ln " style="left:1240px;top:127.6px;letter-spacing:-0.034px;">附属销售员: <b>销售演示002</b></div><div id="f62" class="ln lk" style="left:1240px;top:147.7px;letter-spacing:0.170px;">查看地址&nbsp; 运费试算</div>
<div id="f63" class="ln " style="left:1499.2px;top:5.6px;letter-spacing:0.334px;">创建:2024-03-05 16:12</div><div id="f64" class="ln " style="left:1499.2px;top:26px;letter-spacing:0.334px;">付款:2024-03-05 16:12</div><div id="f65" class="ln " style="left:1499.2px;top:46px;letter-spacing:0.331px;">审核:</div><div id="f66" class="ln " style="left:1499.2px;top:66px;letter-spacing:0.331px;">发货:</div></div>
<div class="row" style="top:662px;height:221px">
<div class="vb" style="left:26px"></div><div class="vb" style="left:269px"></div><div class="vb" style="left:1138px"></div><div class="vb" style="left:1234px"></div><div class="vb" style="left:1493px"></div><div class="vb" style="left:1654px"></div><div class="cb" style="left:7px;top:5px"></div>
<div id="f67" class="ln " style="left:32px;top:5.6px;letter-spacing:0.233px;">订单:<span class="lk">WEC0832504220017</span></div><div id="f68" class="ln " style="left:32px;top:26.6px;letter-spacing:0.332px;">买家ID:yiliu</div><svg style="position:absolute;left:95px;top:25px" width="16" height="16" viewBox="0 0 16 16" fill="none" stroke="#3bb4c8" stroke-width="1.1"><path d="M12.6 4 H15 V15 H4 V12.6"/><rect x=".6" y=".6" width="12" height="12" fill="#e3f5f9"/><path d="M3 3.6 H10.2 M3 6.6 H10.2 M3 9.6 H10.2" stroke-width="1.3" stroke="#5fc3d3"/></svg><div id="f69" class="ln " style="left:32px;top:51.3px;letter-spacing:0.109px;">买家名称:Yi Liu</div><div id="f70" class="ln " style="left:32px;top:71.7px;letter-spacing:0.355px;">卖家:SemiTemu0311</div><div id="f71" class="ln " style="left:32px;top:91.8px;letter-spacing:0.379px;">参考号:PO-211-20816092493430071</div><div id="f72" class="ln " style="left:32px;top:112.8px;letter-spacing:0.023px;">自定义标记:<b style="color:#4b2a6e;font-size:12px">危险危险危险</b></div><div id="f73" class="ln " style="left:32px;top:133px;letter-spacing:0.303px;">创建人:如意版[xiaoshouyanshi]</div><div style="position:absolute;left:32px;top:152.7px;width:100px;height:18px"><div style="position:absolute;left:0;top:0;width:17px;height:16px;background:#fff"></div><svg style="position:absolute;left:2px;top:1.5px" width="14" height="14" viewBox="0 0 14 14" fill="none" stroke="#9a9a9a" stroke-width="1.5"><circle cx="5.6" cy="5.6" r="4"/><path d="M8.8 8.8 L12.4 12.4" stroke-linecap="round" stroke-width="1.9"/></svg><svg style="position:absolute;left:21px;top:1px" width="16.4" height="16.4" viewBox="0 0 16 16"><circle cx="8" cy="8" r="7.7" fill="#27508f"/><circle cx="8" cy="7.4" r="6.3" fill="#3468b4"/><ellipse cx="8" cy="4.6" rx="5" ry="3" fill="#4a7cc6" opacity=".6"/><circle cx="8" cy="4.3" r="1.35" fill="#fff"/><path d="M6.1 6.6 H9.2 V11.3 H10.3 V12.6 H5.9 V11.3 H7 V7.9 H6.1Z" fill="#fff"/></svg><svg style="position:absolute;left:42px;top:1px" width="16.4" height="16.4" viewBox="0 0 16 16"><circle cx="8" cy="8" r="7.7" fill="#262626"/><circle cx="8" cy="8" r="5.9" fill="#f26a58"/><path d="M8 3.8 V8.3 L10.4 10.2" stroke="#262626" stroke-width="1.5" fill="none" stroke-linecap="round"/></svg><div style="position:absolute;left:60px;top:0;width:16px;height:16px;background:#d5e3e8"></div><svg style="position:absolute;left:60px;top:0" width="17" height="17" viewBox="0 0 17 17"><path d="M8.6 5 L11.6 .6" stroke="#333" stroke-width="1.3"/><path d="M1.8 6.2 H13.8 L12.8 13.6 H2.8Z" fill="#42c8b2" stroke="#2a6f68" stroke-width=".8"/><path d="M1 4 H14.6 V6 H1Z" fill="#ebe4cf" stroke="#4a4a3a" stroke-width=".6"/><path d="M4 8.6 H10 M4 10.8 H9" stroke="#2a8f80" stroke-width=".8"/><circle cx="12.4" cy="11.6" r="3.5" fill="#5cc12f"/><path d="M10.9 11.7 L12 12.8 L14 10.4" stroke="#1e6b10" stroke-width="1" fill="none"/></svg><svg style="position:absolute;left:80px;top:0" width="14" height="17" viewBox="0 0 14 17"><path d="M3.6 .8 L5 2 L7 .9 L9 2 L10.4 .8 L9 4.2 H5Z" fill="#f04b36"/><path d="M5 4.8 H9 C11.6 7.2 13.2 10.2 13.2 13 C13.2 15.6 11.6 16.2 7 16.2 C2.4 16.2 .8 15.6 .8 13 C.8 10.2 2.4 7.2 5 4.8Z" fill="#f04b36"/><path d="M4.6 4.5 H9.4" stroke="#fff" stroke-width=".7"/><text x="7" y="14.4" font-size="9" font-weight="bold" fill="#fff" text-anchor="middle" font-family="Liberation Sans,sans-serif">$</text></svg></div>
<div id="f74" class="ln lk" style="left:32px;top:172.4px;letter-spacing:0.329px;">复制订单</div>
<div id="f75" class="ln " style="left:275px;top:5.6px;letter-spacing:0.320px;">最晚发货：<b>2024-03-07 13:10</b> [0天 0小时 0分 ]</div><div id="f76" class="ln lk" style="left:275px;top:28.3px;letter-spacing:0.593px;">Test Mounted Test Mounted Test Mounted</div><div id="f77" class="ln " style="left:275px;top:51.3px;letter-spacing:0.082px;">SKU: <b>YY10011</b></div><svg style="position:absolute;left:362px;top:56px" width="12.4" height="12.4" viewBox="0 0 13 13" fill="#3b8dbb"><rect x="0" y="0" width="5.4" height="5.4" rx="1"/><rect x="6.8" y="0" width="5.4" height="5.4" rx="1"/><rect x="0" y="6.8" width="5.4" height="5.4" rx="1"/><path d="M9.5 7 V12 M7 9.5 H12" stroke="#3b8dbb" stroke-width="1.1"/></svg><div id="f78" class="ln " style="left:275px;top:71.4px;letter-spacing:0.344px;">SKU单号：211-20816102979190071</div><div id="f79" class="ln " style="left:275px;top:91.5px;letter-spacing:-0.044px;">SKU状态：UN_SHIPPING(待发货)</div><div id="f80" class="ln " style="left:275px;top:111.6px;letter-spacing:0.301px;">SKU ID：yiliu</div><div id="f81" class="ln " style="left:275px;top:134.3px;letter-spacing:0.111px;"><b style="color:#2a8a00;font-size:12px">系统备注</b>:从订单 WEC0922503210004 拆分后的子订单【原始系统备</div><div id="f82" class="ln " style="left:275px;top:154.35px;letter-spacing:0.190px;">注:WEC0392406260002,WEC0992412090001,WEC0482412090002,WEC0972412090003,WEC0412412090004,WEC0522412090005,WEC086241209000</div><div id="f83" class="ln " style="left:275px;top:174.4px;letter-spacing:0.169px;">6,WEC0852412310002 订单合并】</div><div id="f84" class="ln " style="left:275px;top:194.5px;letter-spacing:0.176px;"><b style="color:#2a8a00;font-size:12px">客服备注</b>:123</div>
<div id="f85" class="ln " style="left:532.2px;top:50.5px;letter-spacing:0.380px;">Qty: <b>1</b></div><div id="f86" class="ln " style="left:602.4px;top:51.6px;letter-spacing:0.071px;">仓库SKU:<span class="lk">BB00001</span>[冻结]</div><svg style="position:absolute;left:735px;top:50px" width="16" height="16" viewBox="0 0 16 16" fill="none" stroke="#3bb4c8" stroke-width="1.1"><path d="M12.6 4 H15 V15 H4 V12.6"/><rect x=".6" y=".6" width="12" height="12" fill="#e3f5f9"/><path d="M3 3.6 H10.2 M3 6.6 H10.2 M3 9.6 H10.2" stroke-width="1.3" stroke="#5fc3d3"/></svg><div id="f87" class="ln " style="left:602.4px;top:75.5px;letter-spacing:0.088px;">产品名称: 袜子</div><div id="f88" class="ln " style="left:902.6px;top:50.5px;letter-spacing:0.380px;">Qty: <b>2</b></div><div id="f89" class="ln " style="left:1015.7px;top:25.6px;letter-spacing:0.221px;">单价:<b>0.000 RMB</b></div><div class="q" style="left:1119.5px;top:26px">?</div><div class="rma" style="top:50px;left:1059px">RMA管理</div>
<div class="am" style="left:1138px;top:6px">总金额:</div><div class="am" style="left:1138px;top:22px"><b>0.000</b></div><div class="am" style="left:1138px;top:38px">已支付:</div><div class="am" style="left:1138px;top:54px">0.000</div><div class="am" style="left:1138px;top:70px">RMB</div><div class="am" style="left:1138px;top:86px">运费:</div><div class="am" style="left:1138px;top:102px">0.000</div><div class="am" style="left:1138px;top:118px">RMB</div><div class="am" style="left:1138px;top:134px"><span class="lk">查看金额</span></div>
<div id="f90" class="ln " style="left:1240px;top:5.6px;letter-spacing:0.016px;">国家或地区:<b>美国[United States]</b></div><div id="f91" class="ln " style="left:1240px;top:26px;letter-spacing:0.139px;">平台配送:</div><div id="f92" class="ln " style="left:1240px;top:46.6px;letter-spacing:0.425px;">发运仓库<span style="display:inline-block;width:13px"></span>:A [1]</div><div class="q" style="left:1288.5px;top:50px">?</div><div id="f93" class="ln " style="left:1240px;top:66.9px;letter-spacing:-0.132px;">仓库配送:<span class="lk">YYCN-SF [YY菜鸟顺丰]</span></div><div id="f94" class="ln " style="left:1240px;top:87.3px;letter-spacing:0.091px;">跟踪号:暂无</div><div id="f95" class="ln lk" style="left:1240px;top:107.6px;letter-spacing:0.329px;">申报信息</div><div id="f96" class="ln " style="left:1240px;top:127.6px;letter-spacing:0.031px;">附属销售员: <b>如意admin</b></div><div id="f97" class="ln lk" style="left:1240px;top:147.7px;letter-spacing:0.170px;">查看地址&nbsp; 运费试算</div>
<div id="f98" class="ln " style="left:1499.2px;top:5.6px;letter-spacing:0.334px;">创建:2024-03-05 16:12</div><div id="f99" class="ln " style="left:1499.2px;top:26px;letter-spacing:0.334px;">付款:2024-03-05 16:12</div><div id="f100" class="ln " style="left:1499.2px;top:46px;letter-spacing:0.331px;">审核:</div><div id="f101" class="ln " style="left:1499.2px;top:66px;letter-spacing:0.331px;">发货:</div></div>
<div class="row" style="top:882px;height:221px">
<div class="vb" style="left:26px"></div><div class="vb" style="left:269px"></div><div class="vb" style="left:1138px"></div><div class="vb" style="left:1234px"></div><div class="vb" style="left:1493px"></div><div class="vb" style="left:1654px"></div><div class="cb" style="left:7px;top:5px"></div>
<div id="f102" class="ln " style="left:32px;top:5.6px;letter-spacing:0.233px;">订单:<span class="lk">WEC0742504220009</span></div><div id="f103" class="ln " style="left:32px;top:26.6px;letter-spacing:0.332px;">买家ID:yiliu</div><svg style="position:absolute;left:95px;top:25px" width="16" height="16" viewBox="0 0 16 16" fill="none" stroke="#3bb4c8" stroke-width="1.1"><path d="M12.6 4 H15 V15 H4 V12.6"/><rect x=".6" y=".6" width="12" height="12" fill="#e3f5f9"/><path d="M3 3.6 H10.2 M3 6.6 H10.2 M3 9.6 H10.2" stroke-width="1.3" stroke="#5fc3d3"/></svg><div id="f104" class="ln " style="left:32px;top:50.5px;letter-spacing:0.109px;">买家名称:Yi Liu</div><div id="f105" class="ln " style="left:32px;top:71.7px;letter-spacing:0.355px;">卖家:SemiTemu0311</div><div id="f106" class="ln " style="left:32px;top:91.8px;letter-spacing:0.379px;">参考号:PO-211-20816092493430071</div><div class="ln " style="left:32px;top:112px;">自定义标记:<b style="color:#00f;font-size:12px"></b></div><div id="f107" class="ln " style="left:32px;top:132.2px;letter-spacing:0.303px;">创建人:如意版[xiaoshouyanshi]</div><div style="position:absolute;left:32px;top:151.9px;width:100px;height:18px"><div style="position:absolute;left:0;top:0;width:17px;height:16px;background:#fff"></div><svg style="position:absolute;left:2px;top:1.5px" width="14" height="14" viewBox="0 0 14 14" fill="none" stroke="#9a9a9a" stroke-width="1.5"><circle cx="5.6" cy="5.6" r="4"/><path d="M8.8 8.8 L12.4 12.4" stroke-linecap="round" stroke-width="1.9"/></svg><svg style="position:absolute;left:21px;top:1px" width="16.4" height="16.4" viewBox="0 0 16 16"><circle cx="8" cy="8" r="7.7" fill="#27508f"/><circle cx="8" cy="7.4" r="6.3" fill="#3468b4"/><ellipse cx="8" cy="4.6" rx="5" ry="3" fill="#4a7cc6" opacity=".6"/><circle cx="8" cy="4.3" r="1.35" fill="#fff"/><path d="M6.1 6.6 H9.2 V11.3 H10.3 V12.6 H5.9 V11.3 H7 V7.9 H6.1Z" fill="#fff"/></svg><svg style="position:absolute;left:42px;top:1px" width="16.4" height="16.4" viewBox="0 0 16 16"><circle cx="8" cy="8" r="7.7" fill="#262626"/><circle cx="8" cy="8" r="5.9" fill="#f26a58"/><path d="M8 3.8 V8.3 L10.4 10.2" stroke="#262626" stroke-width="1.5" fill="none" stroke-linecap="round"/></svg><div style="position:absolute;left:60px;top:0;width:16px;height:16px;background:#d5e3e8"></div><svg style="position:absolute;left:60px;top:0" width="17" height="17" viewBox="0 0 17 17"><path d="M8.6 5 L11.6 .6" stroke="#333" stroke-width="1.3"/><path d="M1.8 6.2 H13.8 L12.8 13.6 H2.8Z" fill="#42c8b2" stroke="#2a6f68" stroke-width=".8"/><path d="M1 4 H14.6 V6 H1Z" fill="#ebe4cf" stroke="#4a4a3a" stroke-width=".6"/><path d="M4 8.6 H10 M4 10.8 H9" stroke="#2a8f80" stroke-width=".8"/><circle cx="12.4" cy="11.6" r="3.5" fill="#5cc12f"/><path d="M10.9 11.7 L12 12.8 L14 10.4" stroke="#1e6b10" stroke-width="1" fill="none"/></svg><svg style="position:absolute;left:80px;top:0" width="14" height="17" viewBox="0 0 14 17"><path d="M3.6 .8 L5 2 L7 .9 L9 2 L10.4 .8 L9 4.2 H5Z" fill="#f04b36"/><path d="M5 4.8 H9 C11.6 7.2 13.2 10.2 13.2 13 C13.2 15.6 11.6 16.2 7 16.2 C2.4 16.2 .8 15.6 .8 13 C.8 10.2 2.4 7.2 5 4.8Z" fill="#f04b36"/><path d="M4.6 4.5 H9.4" stroke="#fff" stroke-width=".7"/><text x="7" y="14.4" font-size="9" font-weight="bold" fill="#fff" text-anchor="middle" font-family="Liberation Sans,sans-serif">$</text></svg></div>
<div id="f108" class="ln lk" style="left:32px;top:171.6px;letter-spacing:0.329px;">复制订单</div>
<div id="f109" class="ln " style="left:275px;top:5.6px;letter-spacing:0.320px;">最晚发货：<b>2024-03-07 13:10</b> [0天 0小时 0分 ]</div><div id="f110" class="ln lk" style="left:275px;top:27.5px;letter-spacing:0.271px;">Yigutest Trendy Plus Size Women's Dress</div><div id="f111" class="ln " style="left:275px;top:50.5px;letter-spacing:0.145px;">SKU: <b>AKS-HUNIANDAJI</b></div><svg style="position:absolute;left:420px;top:56px" width="12.4" height="12.4" viewBox="0 0 13 13" fill="#3b8dbb"><rect x="0" y="0" width="5.4" height="5.4" rx="1"/><rect x="6.8" y="0" width="5.4" height="5.4" rx="1"/><rect x="0" y="6.8" width="5.4" height="5.4" rx="1"/><path d="M9.5 7 V12 M7 9.5 H12" stroke="#3b8dbb" stroke-width="1.1"/></svg><div id="f112" class="ln " style="left:275px;top:70.6px;letter-spacing:0.344px;">SKU单号：211-20816123950710071</div><div id="f113" class="ln " style="left:275px;top:90.7px;letter-spacing:-0.044px;">SKU状态：UN_SHIPPING(待发货)</div><div id="f114" class="ln " style="left:275px;top:110.8px;letter-spacing:0.301px;">SKU ID：yiliu</div><div id="f115" class="ln " style="left:275px;top:133.5px;letter-spacing:0.111px;"><b style="color:#2a8a00;font-size:12px">系统备注</b>:从订单 WEC0922503210004 拆分后的子订单【原始系统备</div><div id="f116" class="ln " style="left:275px;top:153.55px;letter-spacing:0.190px;">注:WEC0392406260002,WEC0992412090001,WEC0482412090002,WEC0972412090003,WEC0412412090004,WEC0522412090005,WEC086241209000</div><div id="f117" class="ln " style="left:275px;top:173.6px;letter-spacing:0.169px;">6,WEC0852412310002 订单合并】</div><div id="f118" class="ln " style="left:275px;top:193.7px;letter-spacing:0.176px;"><b style="color:#2a8a00;font-size:12px">客服备注</b>:123</div>
<div id="f119" class="ln " style="left:532.2px;top:50.5px;letter-spacing:0.380px;">Qty: <b>1</b></div><div id="f120" class="ln " style="left:602.4px;top:51.6px;letter-spacing:0.064px;">仓库SKU:<span class="lk">YY10011</span>[冻结]</div><svg style="position:absolute;left:734px;top:50px" width="16" height="16" viewBox="0 0 16 16" fill="none" stroke="#3bb4c8" stroke-width="1.1"><path d="M12.6 4 H15 V15 H4 V12.6"/><rect x=".6" y=".6" width="12" height="12" fill="#e3f5f9"/><path d="M3 3.6 H10.2 M3 6.6 H10.2 M3 9.6 H10.2" stroke-width="1.3" stroke="#5fc3d3"/></svg><div id="f121" class="ln " style="left:602.4px;top:75.5px;letter-spacing:0.215px;">产品名称: Apple iPhoneXS 金色 256G</div><div id="f122" class="ln " style="left:902.6px;top:50.5px;letter-spacing:0.380px;">Qty: <b>1</b></div><div id="f123" class="ln " style="left:1015.7px;top:25.6px;letter-spacing:0.221px;">单价:<b>0.000 RMB</b></div><div class="q" style="left:1119.5px;top:26px">?</div><div class="rma" style="top:50px;left:1059px">RMA管理</div>
<div class="am" style="left:1138px;top:6px">总金额:</div><div class="am" style="left:1138px;top:22px"><b>0.000</b></div><div class="am" style="left:1138px;top:38px">已支付:</div><div class="am" style="left:1138px;top:54px">0.000</div><div class="am" style="left:1138px;top:70px">RMB</div><div class="am" style="left:1138px;top:86px">运费:</div><div class="am" style="left:1138px;top:102px">0.000</div><div class="am" style="left:1138px;top:118px">RMB</div><div class="am" style="left:1138px;top:134px"><span class="lk">查看金额</span></div>
<div id="f124" class="ln " style="left:1240px;top:5.6px;letter-spacing:0.016px;">国家或地区:<b>美国[United States]</b></div><div id="f125" class="ln " style="left:1240px;top:26px;letter-spacing:0.139px;">平台配送:</div><div id="f126" class="ln " style="left:1240px;top:46.6px;letter-spacing:0.425px;">发运仓库<span style="display:inline-block;width:13px"></span>:A [1]</div><div class="q" style="left:1288.5px;top:50px">?</div><div id="f127" class="ln " style="left:1240px;top:66.9px;letter-spacing:-0.132px;">仓库配送:<span class="lk">YYCN-SF [YY菜鸟顺丰]</span></div><div id="f128" class="ln " style="left:1240px;top:87.3px;letter-spacing:0.091px;">跟踪号:暂无</div><div id="f129" class="ln lk" style="left:1240px;top:107.6px;letter-spacing:0.329px;">申报信息</div><div id="f130" class="ln " style="left:1240px;top:127.6px;letter-spacing:-0.034px;">附属销售员: <b>销售演示002</b></div><div id="f131" class="ln lk" style="left:1240px;top:147.7px;letter-spacing:0.170px;">查看地址&nbsp; 运费试算</div>
<div id="f132" class="ln " style="left:1499.2px;top:5.6px;letter-spacing:0.334px;">创建:2024-03-05 16:12</div><div id="f133" class="ln " style="left:1499.2px;top:26px;letter-spacing:0.334px;">付款:2024-03-05 16:12</div><div id="f134" class="ln " style="left:1499.2px;top:46px;letter-spacing:0.331px;">审核:</div><div id="f135" class="ln " style="left:1499.2px;top:66px;letter-spacing:0.331px;">发货:</div></div>
<div class="abs" style="left:1481px;top:896px;width:406px;height:35px;background:#fff;border:1px solid #e6e6e6;border-radius:4px"></div><div class="pg" style="left:1486px;width:36px">First</div><div class="pg" style="left:1527px;width:73px">&lt; Previous</div><div class="pg" style="left:1634px;width:51px">Next &gt;</div><div class="pg" style="left:1690px;width:35px">Last</div><div class="pg" style="left:1605px;width:24px;background:#1b9ad8;border-color:#1b9ad8;color:#fff">1</div><div class="ln" style="left:1731px;top:903px;color:#444;letter-spacing:0">PerPage</div><div class="abs" style="left:1780px;top:903px;width:35px;height:21px;border:1px solid #a9b7c6;border-radius:2px;background:#fff;text-align:center;line-height:19px;color:#555">50</div><div class="ln" style="left:1824px;top:903px;color:#444;letter-spacing:.2px">Total <b style="margin-left:4px">19</b></div>
</div>
<div class="abs" style="left:1894px;top:110px;width:6px;height:148px;background:#c6c6c6;border-radius:3px"></div>
<div class="abs" style="left:1883px;top:631px;width:29px;height:122px;background:#4f4f4f;border-radius:5px 0 0 5px;box-shadow:0 1px 4px rgba(0,0,0,.4)"></div><svg class="abs" style="left:1888px;top:637px" width="20" height="20" viewBox="0 0 20 20" fill="none" stroke="#fff" stroke-width="1.6"><path d="M4 12 V9.5 A6 6 0 0 1 16 9.5 V12"/><rect x="2.6" y="9.6" width="3" height="5" rx="1.4" fill="#fff" stroke="none"/><rect x="14.4" y="9.6" width="3" height="5" rx="1.4" fill="#fff" stroke="none"/><path d="M16 14 C16 16.5 14 17.5 11.5 17.5" stroke-linecap="round"/></svg><div class="abs" style="left:1890px;top:659px;width:16px;font-size:13px;line-height:14.6px;color:#fff;text-align:center">人工客服</div><div class="abs" style="left:1883px;top:723px;width:29px;height:1px;background:#8a8a8a"></div><svg class="abs" style="left:1891px;top:732px" width="12" height="12" viewBox="0 0 12 12" fill="none" stroke="#fff" stroke-width="1.2"><path d="M1.5 1 L6 6 L1.5 11 M6.5 1 L11 6 L6.5 11"/></svg><div class="abs" style="left:1895px;top:834px;width:36px;height:36px;border-radius:18px;background:#3b7cf5;color:#fff;font-weight:bold;font-size:14px;line-height:36px;padding-left:10px">A</div>
</body></html>
